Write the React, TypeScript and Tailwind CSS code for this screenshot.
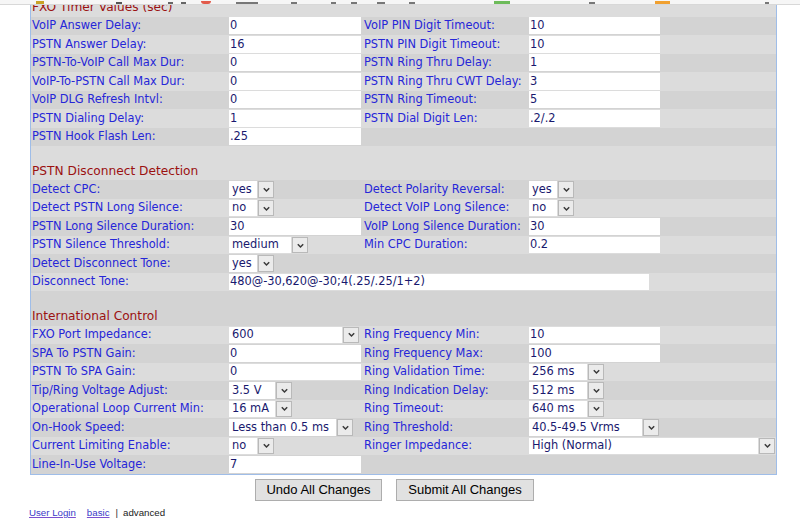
import React from 'react';

type Field =
  | { t: 'text'; v: string; w: string }
  | { t: 'sel'; v: string; w: string }
  | null;

type Row =
  | { kind: 'head'; title: string }
  | { kind: 'row'; l1: string; f1: Field; l2?: string; f2?: Field; span?: boolean };

const IN1 = 'w-[132px]';
const IN2 = 'w-[131px]';

const rows: Row[] = [
  { kind: 'head', title: 'FXO Timer Values (sec)' },
  { kind: 'row', l1: 'VoIP Answer Delay:', f1: { t: 'text', v: '0', w: IN1 }, l2: 'VoIP PIN Digit Timeout:', f2: { t: 'text', v: '10', w: IN2 } },
  { kind: 'row', l1: 'PSTN Answer Delay:', f1: { t: 'text', v: '16', w: IN1 }, l2: 'PSTN PIN Digit Timeout:', f2: { t: 'text', v: '10', w: IN2 } },
  { kind: 'row', l1: 'PSTN-To-VoIP Call Max Dur:', f1: { t: 'text', v: '0', w: IN1 }, l2: 'PSTN Ring Thru Delay:', f2: { t: 'text', v: '1', w: IN2 } },
  { kind: 'row', l1: 'VoIP-To-PSTN Call Max Dur:', f1: { t: 'text', v: '0', w: IN1 }, l2: 'PSTN Ring Thru CWT Delay:', f2: { t: 'text', v: '3', w: IN2 } },
  { kind: 'row', l1: 'VoIP DLG Refresh Intvl:', f1: { t: 'text', v: '0', w: IN1 }, l2: 'PSTN Ring Timeout:', f2: { t: 'text', v: '5', w: IN2 } },
  { kind: 'row', l1: 'PSTN Dialing Delay:', f1: { t: 'text', v: '1', w: IN1 }, l2: 'PSTN Dial Digit Len:', f2: { t: 'text', v: '.2/.2', w: IN2 } },
  { kind: 'row', l1: 'PSTN Hook Flash Len:', f1: { t: 'text', v: '.25', w: IN1 } },

  { kind: 'head', title: 'PSTN Disconnect Detection' },
  { kind: 'row', l1: 'Detect CPC:', f1: { t: 'sel', v: 'yes', w: 'w-[45px]' }, l2: 'Detect Polarity Reversal:', f2: { t: 'sel', v: 'yes', w: 'w-[45px]' } },
  { kind: 'row', l1: 'Detect PSTN Long Silence:', f1: { t: 'sel', v: 'no', w: 'w-[45px]' }, l2: 'Detect VoIP Long Silence:', f2: { t: 'sel', v: 'no', w: 'w-[45px]' } },
  { kind: 'row', l1: 'PSTN Long Silence Duration:', f1: { t: 'text', v: '30', w: IN1 }, l2: 'VoIP Long Silence Duration:', f2: { t: 'text', v: '30', w: IN2 } },
  { kind: 'row', l1: 'PSTN Silence Threshold:', f1: { t: 'sel', v: 'medium', w: 'w-[79px]' }, l2: 'Min CPC Duration:', f2: { t: 'text', v: '0.2', w: IN2 } },
  { kind: 'row', l1: 'Detect Disconnect Tone:', f1: { t: 'sel', v: 'yes', w: 'w-[45px]' } },
  { kind: 'row', l1: 'Disconnect Tone:', f1: { t: 'text', v: '480@-30,620@-30;4(.25/.25/1+2)', w: 'w-[420px]' }, span: true },

  { kind: 'head', title: 'International Control' },
  { kind: 'row', l1: 'FXO Port Impedance:', f1: { t: 'sel', v: '600', w: 'w-[130px]' }, l2: 'Ring Frequency Min:', f2: { t: 'text', v: '10', w: IN2 } },
  { kind: 'row', l1: 'SPA To PSTN Gain:', f1: { t: 'text', v: '0', w: IN1 }, l2: 'Ring Frequency Max:', f2: { t: 'text', v: '100', w: IN2 } },
  { kind: 'row', l1: 'PSTN To SPA Gain:', f1: { t: 'text', v: '0', w: IN1 }, l2: 'Ring Validation Time:', f2: { t: 'sel', v: '256 ms', w: 'w-[75px]' } },
  { kind: 'row', l1: 'Tip/Ring Voltage Adjust:', f1: { t: 'sel', v: '3.5 V', w: 'w-[63px]' }, l2: 'Ring Indication Delay:', f2: { t: 'sel', v: '512 ms', w: 'w-[75px]' } },
  { kind: 'row', l1: 'Operational Loop Current Min:', f1: { t: 'sel', v: '16 mA', w: 'w-[63px]' }, l2: 'Ring Timeout:', f2: { t: 'sel', v: '640 ms', w: 'w-[75px]' } },
  { kind: 'row', l1: 'On-Hook Speed:', f1: { t: 'sel', v: 'Less than 0.5 ms', w: 'w-[124px]' }, l2: 'Ring Threshold:', f2: { t: 'sel', v: '40.5-49.5 Vrms', w: 'w-[130px]' } },
  { kind: 'row', l1: 'Current Limiting Enable:', f1: { t: 'sel', v: 'no', w: 'w-[45px]' }, l2: 'Ringer Impedance:', f2: { t: 'sel', v: 'High (Normal)', w: 'w-[246px]' } },
  { kind: 'row', l1: 'Line-In-Use Voltage:', f1: { t: 'text', v: '7', w: IN1 } },
];

const Chevron = () => (
  <svg width="9" height="9" viewBox="0 0 10 10">
    <path d="M2 3.6 L5 6.6 L8 3.6" fill="none" stroke="#3a3a3a" strokeWidth="1.7" />
  </svg>
);

const FieldBox = ({ f }: { f: Field }) => {
  if (!f) return null;
  if (f.t === 'text') {
    return (
      <div className={`h-[16.6px] bg-white pl-[1px] flex items-center text-[#19196e] whitespace-nowrap ${f.w}`}>
        {f.v}
      </div>
    );
  }
  return (
    <div className={`flex h-[16.6px] ${f.w}`}>
      <div className="flex-1 bg-white pl-[3px] flex items-center text-[#19196e] whitespace-nowrap overflow-hidden">
        {f.v}
      </div>
      <div className="ml-[1px] w-[16px] h-full border border-[#b9b9b9] bg-[#ebebeb] flex items-center justify-center">
        <Chevron />
      </div>
    </div>
  );
};

export default function App() {
  return (
    <div className="w-[800px] h-[532px] overflow-hidden bg-white font-['DejaVu_Sans',sans-serif]">
      {/* browser toolbar, cut off at the top */}
      <div className="h-[5px] bg-[#f6f6f6] border-b border-[#d8d8d8] flex items-end overflow-hidden">
        <span className="ml-[36px] w-[8px] h-[3px] bg-[#c9a227]" />
        <span className="ml-[72px] w-[6px] h-[2px] bg-[#555]" />
        <span className="ml-[46px] w-[5px] h-[2px] bg-[#666]" />
        <span className="ml-[8px] w-[5px] h-[2px] bg-[#666]" />
        <span className="ml-[15px] w-[10px] h-[3px] rounded-b-full bg-[#e25b4b]" />
        <span className="ml-[25px] w-[22px] h-[2px] bg-[#777]" />
        <span className="ml-[33px] w-[6px] h-[2px] bg-[#777]" />
        <span className="ml-[34px] w-[5px] h-[2px] bg-[#777]" />
        <span className="ml-[15px] w-[6px] h-[2px] bg-[#777]" />
        <span className="ml-[20px] w-[8px] h-[2px] bg-[#777]" />
        <span className="ml-[24px] w-[6px] h-[2px] bg-[#777]" />
        <span className="ml-[79px] w-[16px] h-[3px] bg-[#6dbb5a]" />
        <span className="ml-[79px] w-[6px] h-[2px] bg-[#777]" />
        <span className="ml-[60px] w-[15px] h-[3px] bg-[#f0a030]" />
        <span className="ml-[95px] w-[4px] h-[2px] bg-[#777]" />
      </div>

      <div className="h-[527px] overflow-hidden">
        <div className="-mt-[22.8px] ml-[30px] w-[747px] border-l border-r border-b border-[#9fbde8] text-[11.4px] leading-none">
          {rows.map((r, i) => {
            const bg = i % 2 === 0 ? 'bg-[#dcdcdc]' : 'bg-[#d3d3d3]';
            if (r.kind === 'head') {
              return (
                <div key={i} className={`h-[34.3px] flex items-end ${bg}`}>
                  <div className="h-[18.5px] pl-[1px] flex items-center text-[12.2px] text-[#9b1111]">{r.title}</div>
                </div>
              );
            }
            return (
              <div key={i} className={`h-[18.5px] flex items-center ${bg}`}>
                <div className="w-[198px] pl-[1px] text-[#2626d8] whitespace-nowrap">{r.l1}</div>
                {r.span ? (
                  <div className="flex-1">
                    <FieldBox f={r.f1} />
                  </div>
                ) : (
                  <>
                    <div className="w-[134px]">
                      <FieldBox f={r.f1} />
                    </div>
                    <div className="w-[166px] pl-[1px] text-[#2626d8] whitespace-nowrap">{r.l2 ?? ''}</div>
                    <div className="flex-1">
                      <FieldBox f={r.f2 ?? null} />
                    </div>
                  </>
                )}
              </div>
            );
          })}
        </div>

        <div className="mt-[4px] pl-[255px] flex gap-[14px] font-['Liberation_Sans',sans-serif] text-[13px]">
          <button className="w-[127px] h-[22px] bg-[#e1e1e1] border border-[#adadad] text-black">Undo All Changes</button>
          <button className="w-[138px] h-[22px] bg-[#e1e1e1] border border-[#adadad] text-black">Submit All Changes</button>
        </div>

        <div className="mt-[6px] pl-[29px] flex items-center font-['Liberation_Sans',sans-serif] text-[9.7px] leading-[11px]">
          <a className="text-[#3a3ac8] underline decoration-[#7a50d0]">User Login</a>
          <a className="ml-[11px] text-[#3a3ac8] underline decoration-[#7a50d0]">basic</a>
          <span className="ml-[6px] text-[#333]">|</span>
          <span className="ml-[5px] text-[#222]">advanced</span>
        </div>
      </div>
    </div>
  );
}
